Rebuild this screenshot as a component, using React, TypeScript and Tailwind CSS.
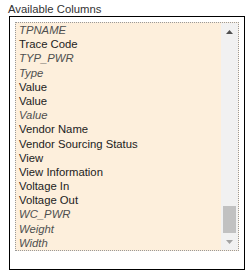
const columns: { name: string; italic?: boolean }[] = [
  { name: 'TPNAME', italic: true },
  { name: 'Trace Code' },
  { name: 'TYP_PWR', italic: true },
  { name: 'Type', italic: true },
  { name: 'Value' },
  { name: 'Value' },
  { name: 'Value', italic: true },
  { name: 'Vendor Name' },
  { name: 'Vendor Sourcing Status' },
  { name: 'View' },
  { name: 'View Information' },
  { name: 'Voltage In' },
  { name: 'Voltage Out' },
  { name: 'WC_PWR', italic: true },
  { name: 'Weight', italic: true },
  { name: 'Width', italic: true },
];

export default function App() {
  return (
    <div className="w-[252px] h-[276px] bg-white pt-[2px] pl-[8px] font-['Liberation_Sans',Arial,sans-serif] text-[11.3px] text-[#333]">
      {/* label */}
      <div className="leading-[14px] h-[14px]">Available Columns</div>

      {/* outer box */}
      <div className="ml-[1px] w-[236px] h-[254px] border border-black p-[5px]">
        {/* list */}
        <div className="flex h-[229px] border border-dotted border-[#999] bg-[#fdefdc]">
          <div className="flex-1 overflow-hidden pl-[3px]">
            {columns.map((c, i) => (
              <div
                key={i}
                className={`h-[14.2px] leading-[14.2px] whitespace-nowrap ${
                  c.italic ? 'italic text-[#4f4f4f]' : 'text-[#222]'
                }`}
              >
                {c.name}
              </div>
            ))}
          </div>

          {/* scrollbar */}
          <div className="w-[17px] bg-[#f1f1f1] flex flex-col items-center">
            <div className="h-[17px] flex items-center justify-center">
              <svg width="7" height="4" viewBox="0 0 7 4">
                <polygon points="3.5,0 7,4 0,4" fill="#505050" />
              </svg>
            </div>
            <div className="flex-1 w-full flex flex-col justify-end px-[2px]">
              <div className="h-[27px] bg-[#c1c1c1]" />
            </div>
            <div className="h-[17px] flex items-center justify-center">
              <svg width="7" height="4" viewBox="0 0 7 4">
                <polygon points="0,0 7,0 3.5,4" fill="#a3a3a3" />
              </svg>
            </div>
          </div>
        </div>
      </div>
    </div>
  );
}
